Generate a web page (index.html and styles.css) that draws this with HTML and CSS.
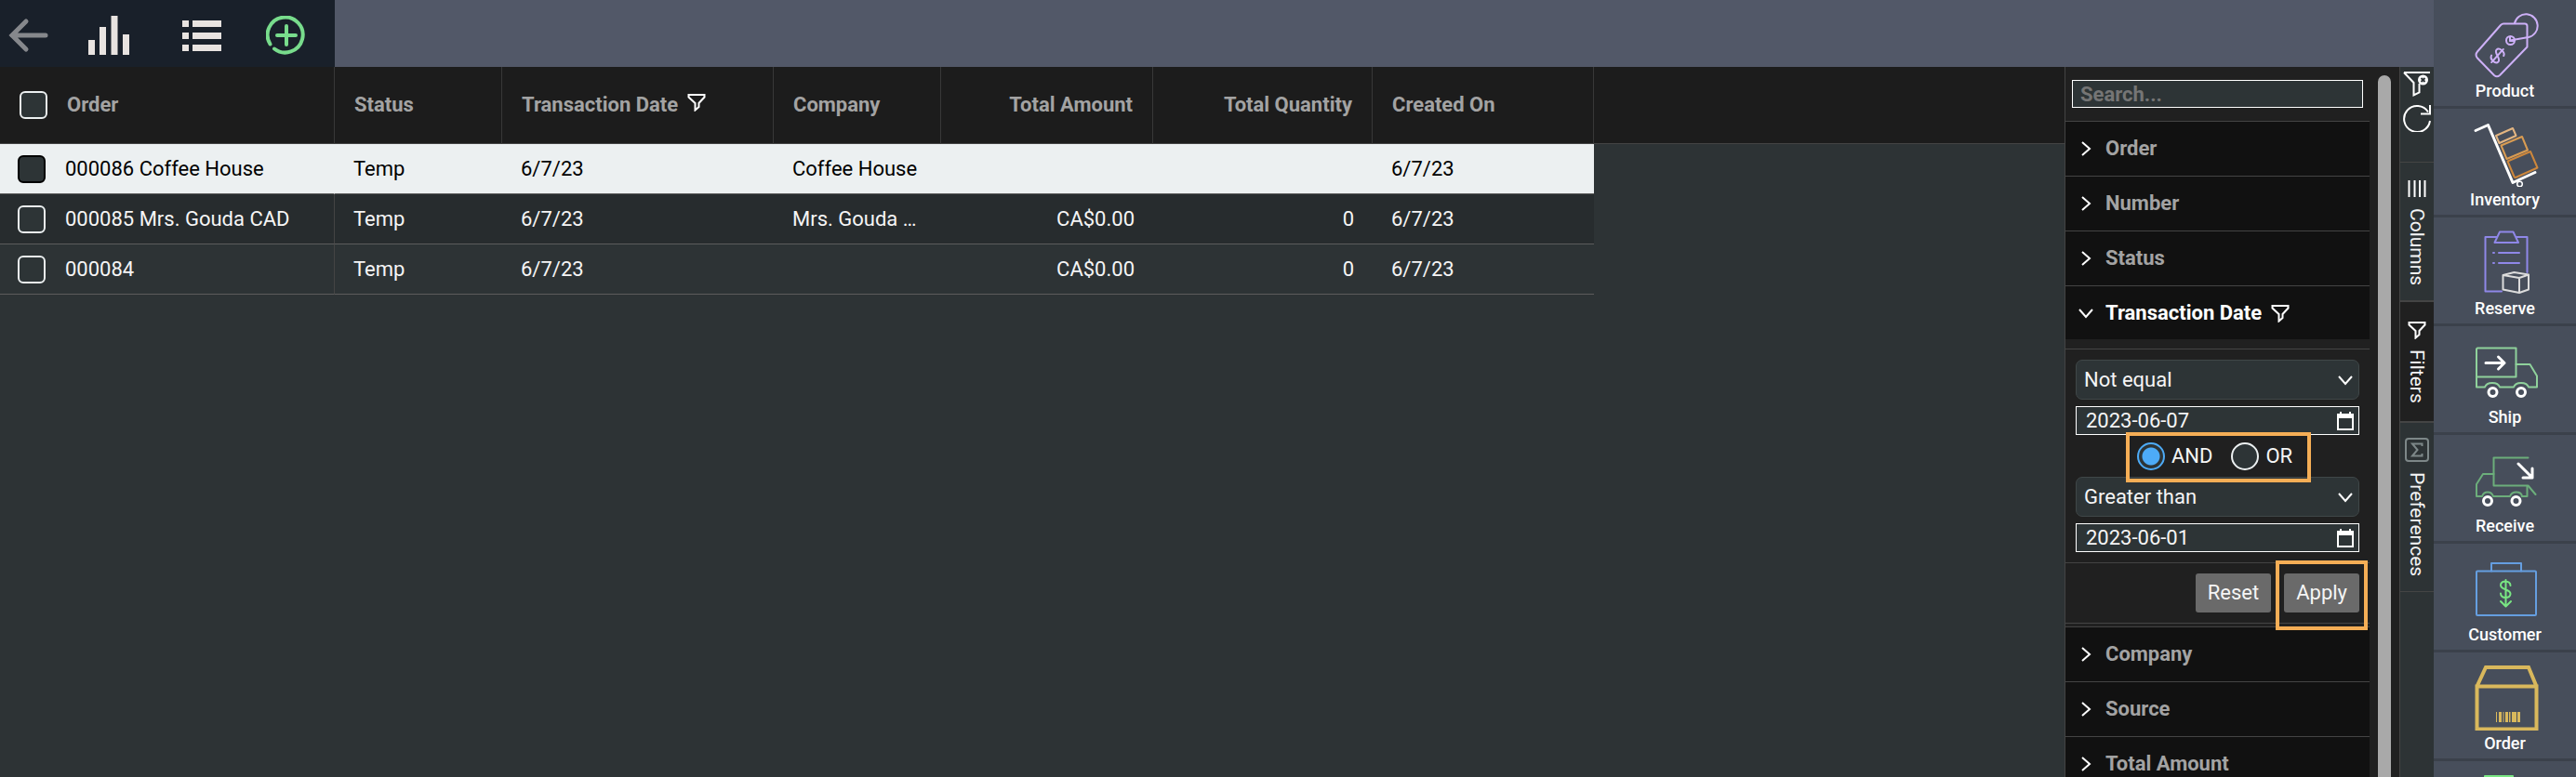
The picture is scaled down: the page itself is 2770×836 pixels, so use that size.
FILE: index.html
```html
<!DOCTYPE html>
<html lang="en">
<head>
    <meta charset="UTF-8">
    <meta name="viewport" content="width=device-width, initial-scale=1.0">
    <title>Orders</title>
    <link rel="stylesheet" href="styles.css">
</head>
<body>
    <!-- shared icons -->
    <svg class="sprite" aria-hidden="true">
        <symbol id="i-filter" viewBox="0 0 20 20"><path d="M1.500 2h17v2.500l-6 6.500v4l-4 3.500V11L1.500 4.500z"/></symbol>
        <symbol id="i-right" viewBox="0 0 16 16"><path d="M4 1l8 7-8 7"/></symbol>
        <symbol id="i-down" viewBox="0 0 16 16"><path d="M1 4l7 8 7-8"/></symbol>
        <symbol id="i-calendar" viewBox="0 0 20 20"><path d="M2 3h16v16H2z"/><path class="solid" d="M1 2h3V0h2v2h8V0h2v2h3v5H1z"/></symbol>
    </svg>

    <div class="main">
        <header class="topbar">
            <div class="toolbar">
                <button type="button" aria-label="Back">
                    <svg class="icon-back" viewBox="0 0 42 42"><path d="M39 21H3M18 6L3 21l15 15"/></svg>
                </button>
                <button type="button" aria-label="Charts">
                    <svg class="icon-light" viewBox="0 0 44 42"><path d="M0 26h7v16H0zM12 12h7v30h-7zM24.500 0h7v42h-7zM37 20h7v22h-7z"/></svg>
                </button>
                <button type="button" aria-label="List">
                    <svg class="icon-light" viewBox="0 0 44 42"><path d="M1 5h7v7H1zM12 5h31v7H12zM1 18h7v7H1zM12 18h31v7H12zM1 31h7v7H1zM12 31h31v7H12z"/></svg>
                </button>
                <button type="button" aria-label="Add">
                    <svg class="icon-add" viewBox="0 0 42 42"><path d="M8 35.500A19 19 0 1 0 3.500 30.500M21 11v20M11 21h20"/></svg>
                </button>
            </div>
        </header>

        <div class="workspace">
            <div class="grid">
                <table>
                    <colgroup>
                        <col class="col-order"><col class="col-status"><col class="col-date"><col class="col-company">
                        <col class="col-amount"><col class="col-quantity"><col class="col-created"><col>
                    </colgroup>
                    <thead>
                        <tr>
                            <th><label class="check"><input type="checkbox">Order</label></th>
                            <th>Status</th>
                            <th>Transaction Date <svg class="icon-filter"><use href="#i-filter"/></svg></th>
                            <th>Company</th>
                            <th class="num">Total Amount</th>
                            <th class="num">Total Quantity</th>
                            <th>Created On</th>
                            <td></td>
                        </tr>
                    </thead>
                    <tbody>
                        <tr class="selected">
                            <td><label class="check"><input type="checkbox">000086 Coffee House</label></td>
                            <td>Temp</td><td>6/7/23</td><td>Coffee House</td>
                            <td class="num"></td><td class="num"></td><td>6/7/23</td>
                        </tr>
                        <tr class="odd">
                            <td><label class="check"><input type="checkbox">000085 Mrs. Gouda CAD</label></td>
                            <td>Temp</td><td>6/7/23</td><td>Mrs. Gouda …</td>
                            <td class="num">CA$0.00</td><td class="num">0</td><td>6/7/23</td>
                        </tr>
                        <tr>
                            <td><label class="check"><input type="checkbox">000084</label></td>
                            <td>Temp</td><td>6/7/23</td><td></td>
                            <td class="num">CA$0.00</td><td class="num">0</td><td>6/7/23</td>
                        </tr>
                    </tbody>
                </table>
            </div>

            <aside class="panel">
                <div class="panel-body">
                    <div class="search">
                        <input type="text" placeholder="Search..." aria-label="Search">
                    </div>
                    <button type="button" class="group"><svg><use href="#i-right"/></svg>Order</button>
                    <button type="button" class="group"><svg><use href="#i-right"/></svg>Number</button>
                    <button type="button" class="group"><svg><use href="#i-right"/></svg>Status</button>
                    <button type="button" class="group open"><svg><use href="#i-down"/></svg>Transaction Date <svg class="icon-filter"><use href="#i-filter"/></svg></button>
                    <form class="filter">
                        <div class="fields">
                            <div class="field">
                                <select aria-label="First condition"><option>Not equal</option></select>
                                <svg class="icon-down"><use href="#i-down"/></svg>
                            </div>
                            <div class="field">
                                <input type="text" class="date" value="2023-06-07" aria-label="First date">
                                <svg class="icon-calendar"><use href="#i-calendar"/></svg>
                            </div>
                            <div class="operator">
                                <label><input type="radio" name="operator" checked>AND</label>
                                <label><input type="radio" name="operator">OR</label>
                            </div>
                            <div class="field">
                                <select aria-label="Second condition"><option>Greater than</option></select>
                                <svg class="icon-down"><use href="#i-down"/></svg>
                            </div>
                            <div class="field">
                                <input type="text" class="date" value="2023-06-01" aria-label="Second date">
                                <svg class="icon-calendar"><use href="#i-calendar"/></svg>
                            </div>
                        </div>
                        <div class="actions">
                            <button type="button">Reset</button>
                            <span class="apply"><button type="button">Apply</button></span>
                        </div>
                    </form>
                    <button type="button" class="group"><svg><use href="#i-right"/></svg>Company</button>
                    <button type="button" class="group"><svg><use href="#i-right"/></svg>Source</button>
                    <button type="button" class="group"><svg><use href="#i-right"/></svg>Total Amount</button>
                </div>
                <div class="scrollbar"></div>
            </aside>

            <div class="rail">
                <div class="rail-tools">
                    <button type="button" aria-label="Clear filters">
                        <svg viewBox="0 0 30 30"><path d="M1 2h28M1 2l10.500 11v13.500l6-3V14"/><circle class="solid" cx="21.500" cy="10" r="5.500"/><path class="cross" d="M19.500 8l4 4M23.500 8l-4 4"/></svg>
                    </button>
                    <button type="button" aria-label="Refresh">
                        <svg viewBox="0 0 30 30"><path d="M29 18A14 14 0 1 1 27 8.500M29 1v9.500H19"/></svg>
                    </button>
                </div>
                <button type="button" class="tab tab-columns">
                    <svg viewBox="0 0 20 20"><path d="M1.500 1v18M7.500 1v18M13 1v18M18.500 1v18"/></svg>Columns
                </button>
                <button type="button" class="tab tab-filters">
                    <svg><use href="#i-filter"/></svg>Filters
                </button>
                <button type="button" class="tab tab-preferences">
                    <svg viewBox="0 0 26 26"><rect x="1" y="1" width="24" height="24" rx="3"/><path d="M18.500 9V6.500H8l5.500 6.500L8 19.500h10.500V17"/></svg>Preferences
                </button>
            </div>
        </div>
    </div>

    <nav class="modules">
        <a href="#product">
            <svg viewBox="0 0 72 72" class="c-product">
                <path d="M34 13.500h23q2.500 0 2.500 2.500v22.500L30 69q-3 2.500-6 0L6 50.500q-3-3.500 0-7L31 15q1.500-1.500 3-1.500z"/>
                <path d="M46 13A12.500 12.500 0 1 1 61 28L41 31.500"/>
                <circle cx="41.500" cy="31.500" r="4.500"/><path d="M41 28v4h4"/>
                <g transform="rotate(42 27.500 48)"><path d="M32.500 43.500c-1-4-10-4-10 .5 0 4.500 10 3.500 10 8 0 4.500-9 4.500-10 0M27.500 38.500v19"/></g>
            </svg>
            Product
        </a>
        <a href="#inventory">
            <svg viewBox="0 0 72 72">
                <path class="c-white" d="M4 11.500L17.500 5.500 44 67.500l24-11"/><circle class="c-white thin" cx="51.500" cy="69" r="2.800"/>
                <path class="c-box1" d="M26 17l18-8 3.500 8-18 8z"/>
                <path class="c-box2" d="M31.500 27.500L54 18l6 14.500-22.500 9.500z"/>
                <path class="c-box3" d="M38.500 44.500L63 34l7.500 17.500L47 62q-1 0-1.500-1z"/>
            </svg>
            Inventory
        </a>
        <a href="#reserve">
            <svg viewBox="0 0 72 72" class="c-reserve">
                <path d="M27 9H14.500v58.500H32M47 9h12.500v38M30 3.500h14.500L50 15H24.500z"/>
                <path d="M29 26h22M29 37h22M23 26h1M23 37h1"/>
                <path class="c-cube" d="M33.500 50l12-3L61 49.500v16L51 69l-17.500-3.500zM33.500 50L51 53l10-3.500M51 53v16"/>
            </svg>
            Reserve
        </a>
        <a href="#ship">
            <svg viewBox="0 0 72 72" class="c-ship">
                <path d="M6 11.500h41.500v31H5V12.500z"/>
                <path d="M5 42.500v11h9c2-6 14-6 16 0h15c2-6 14-6 16 0h9v-12l-7.500-12.500h-15"/>
                <circle class="c-white" cx="22.500" cy="59" r="4.500"/><circle class="c-white" cx="53" cy="59" r="4.500"/>
                <path class="c-white" d="M15 27.500h20M28.500 21l6.500 6.500-6.500 6.500"/>
            </svg>
            Ship
        </a>
        <a href="#receive">
            <svg viewBox="0 0 72 72" class="c-receive">
                <path d="M60.500 12.500h-37v30h37L68.500 52"/>
                <path d="M23.500 30H12L5 41v13h6c2-6 10-6 12 0h18c2-6 12-6 13 0h5.500V43"/>
                <circle class="c-white" cx="17" cy="59" r="4.500"/><circle class="c-white" cx="47.500" cy="59" r="4.500"/>
                <path class="c-white" d="M50 19l15 15M65 24v10H55"/>
            </svg>
            Receive
        </a>
        <a href="#customer">
            <svg viewBox="0 0 72 72" class="c-customer">
                <rect x="5" y="17.500" width="64" height="47.500" rx="1"/><path d="M21 17.500V9h32v8.500"/>
                <path class="c-money" d="M41.500 33c0-6-10.500-6-10.500-.5s10.500 4 10.500 9.500-10.500 5.500-10.500-.5M36.500 27v28M31 50l5.500 5.500L42 50"/>
            </svg>
            Customer
        </a>
        <a href="#order">
            <svg viewBox="0 0 72 72" class="c-order">
                <path d="M5.500 24.500v46h64v-46zM5.500 24.500L15 4h46l8.500 20.500"/>
                <path class="bars" d="M26 52h1v11h-1zM29 52h3v11h-3zM33.500 52h1v11h-1zM36 52h3v11h-3zM40 52h1.500v11H40zM43 52h5v11h-5zM49 52h3v11h-3z"/>
            </svg>
            Order
        </a>
        <a href="#more" aria-label="More">
            <svg viewBox="0 0 72 72"><path class="c-money" d="M14 4h30v40H14z"/></svg>
        </a>
    </nav>
</body>
</html>
```
FILE: styles.css
```css
* {
    box-sizing: border-box;
    margin: 0;
    padding: 0;
}

body {
    display: flex;
    height: 100vh;
    overflow: hidden;
    background-color: #2d3335;
    color: #f5f5f5;
    font-family: Roboto, sans-serif;
    font-size: 22px;
    line-height: 26px;
}

button,
input,
select {
    font: inherit;
    color: inherit;
    background: none;
    border: none;
    border-radius: 0;
    outline: none;
}

button {
    cursor: pointer;
}

svg {
    fill: none;
    stroke: #fff;
    stroke-width: 2;
    flex: none;
}

.solid {
    fill: #fff;
    stroke: none;
}

.sprite {
    display: none;
}

.main {
    flex: 1;
    min-width: 0;
    display: flex;
    flex-direction: column;
}

/* top bar */
.topbar {
    height: 72px;
    flex: none;
    display: flex;
    background-color: #525868;
}

.toolbar {
    width: 360px;
    display: grid;
    grid-template-columns: 62px 110px 90px 92px;
    background-color: #19202a;
}

.toolbar button {
    display: flex;
    align-items: center;
    justify-content: center;
    padding-top: 4px;
}

.toolbar svg {
    width: 44px;
    height: 42px;
}

.toolbar .icon-back {
    stroke: #86888c;
    stroke-width: 5;
    stroke-linecap: round;
}

.toolbar .icon-light {
    fill: #e8e3e0;
    stroke: none;
}

.toolbar .icon-add {
    stroke: #78dc8c;
    stroke-width: 4;
    stroke-linecap: round;
}

.workspace {
    flex: 1;
    min-height: 0;
    display: flex;
}

/* grid */
.grid {
    flex: 1;
    min-width: 0;
}

table {
    width: 100%;
    table-layout: fixed;
    border-collapse: separate;
    border-spacing: 0;
}

.col-order { width: 360px; }
.col-status { width: 180px; }
.col-date { width: 292px; }
.col-company { width: 180px; }
.col-amount { width: 228px; }
.col-quantity { width: 236px; }
.col-created { width: 238px; }

th,
td {
    padding: 0 20px;
    text-align: left;
    white-space: nowrap;
    overflow: hidden;
    text-overflow: ellipsis;
}

thead th,
thead td {
    height: 83px;
    padding: 0 21px;
    background-color: #1c1c1c;
    border-bottom: 1px solid #444;
    color: #a3a3a3;
    font-weight: 700;
}

thead th {
    border-right: 1px solid #383838;
}

tbody td {
    height: 54px;
    border-bottom: 1px solid #5c5c5c;
}

tbody td:first-child {
    padding-left: 19px;
    border-right: 1px solid #444;
}

.odd td {
    background-color: #272c2e;
}

.selected td {
    background-color: #ecf0f1;
    color: #000;
}

.selected td:first-child {
    border-right-color: #ecf0f1;
}

.num {
    text-align: right;
}

.check {
    display: flex;
    align-items: center;
    gap: 21px;
}

.check input {
    appearance: none;
    width: 30px;
    height: 30px;
    flex: none;
    border: 2px solid #ecf0f1;
    border-radius: 6px;
    background-color: #2d3436;
}

.selected .check input {
    border-color: #000;
}

.icon-filter {
    width: 20px;
    height: 20px;
    margin-left: 4px;
}

/* filter panel */
.panel {
    width: 360px;
    flex: none;
    display: flex;
    border-left: 1px solid #444;
    background-color: #202020;
}

.panel-body {
    width: 327px;
    overflow: hidden;
}

.search {
    height: 58px;
    padding: 14px 7px;
}

.search input {
    display: block;
    width: 100%;
    height: 30px;
    padding: 0 8px;
    border: 1px solid #fff;
    background-color: #2d3436;
}

.search input::placeholder {
    color: #757575;
    font-weight: 700;
}

.group {
    display: flex;
    align-items: center;
    width: 100%;
    height: 59px;
    padding: 0 14px;
    border-top: 1px solid #444;
    background-color: #111;
    color: #a3a3a3;
    font-weight: 700;
}

.group svg:first-child {
    width: 16px;
    height: 16px;
    margin-right: 13px;
}

.group .icon-filter {
    margin-left: 10px;
}

.group.open {
    height: 58px;
    color: #fff;
}

.filter {
    margin: 10px 0 3px;
    border-top: 1px solid #444;
    border-bottom: 1px solid #444;
}

.fields {
    display: grid;
    gap: 7px;
    padding: 11px;
}

.field {
    display: grid;
    align-items: center;
}

.field > * {
    grid-area: 1 / 1;
}

.field svg {
    justify-self: end;
    pointer-events: none;
}

.field select {
    appearance: none;
    width: 100%;
    height: 43px;
    padding: 0 8px;
    border: 1px solid #404748;
    border-radius: 7px;
    background-color: #2d3436;
}

.field .date {
    width: 100%;
    height: 31px;
    padding: 0 10px;
    border: 1px solid #fff;
    background-color: #2d3436;
}

.icon-down {
    width: 16px;
    height: 16px;
    margin-right: 7px;
}

.icon-calendar {
    width: 20px;
    height: 20px;
    margin-right: 5px;
}

.operator {
    position: relative;
    display: flex;
    justify-content: center;
    gap: 20px;
    height: 31px;
    padding-right: 6px;
}

.operator label {
    display: flex;
    align-items: center;
    gap: 7px;
}

.operator input {
    appearance: none;
    width: 30px;
    height: 30px;
    border: 2px solid #ecf0f1;
    border-radius: 50%;
    background-color: #2d3436;
}

.operator input:checked {
    border-color: #4dabf7;
    background: #2d3436 radial-gradient(circle, #4dabf7 9px, transparent 10px);
}

/* highlight frames */
.operator::after,
.apply::after {
    content: '';
    position: absolute;
    border: 4px solid #f5ae56;
    pointer-events: none;
}

.operator::after {
    inset: -10px 52px -13px 54px;
}

.apply {
    position: relative;
}

.apply::after {
    inset: -14px -9px -19px;
}

.actions {
    display: flex;
    justify-content: flex-end;
    gap: 14px;
    padding: 11px;
    border-top: 1px solid #444;
}

.actions button {
    display: block;
    height: 42px;
    padding: 0 13px;
    border-radius: 3px;
    background-color: #6a6a6a;
}

.scrollbar {
    width: 14px;
    margin: 9px 0 0 9px;
    border-radius: 7px 7px 0 0;
    background-color: #a9a9a9;
}

/* side rail */
.rail {
    width: 37px;
    flex: none;
    border-left: 1px solid #444;
}

.rail-tools {
    display: flex;
    flex-direction: column;
    align-items: center;
    gap: 6px;
    height: 102px;
    padding-top: 4px;
}

.rail-tools svg {
    display: block;
    width: 30px;
    height: 30px;
}

.rail-tools .cross {
    stroke: #2d3436;
}

.tab {
    display: flex;
    align-items: center;
    gap: 11px;
    width: 36px;
    padding: 18px 0 16px;
    border-top: 1px solid #444;
    font-size: 21px;
    writing-mode: vertical-rl;
}

.tab svg {
    width: 20px;
    height: 20px;
}

.tab-filters {
    padding: 20px 0 19px;
    border-top: 2px solid #444;
    border-bottom: 1px solid #444;
    background-color: #202020;
}

.tab-preferences {
    padding: 16px 0;
    border-bottom: 1px solid #444;
}

.tab-preferences svg {
    width: 26px;
    height: 26px;
    stroke: #7d8788;
}

/* module menu */
.modules {
    width: 153px;
    flex: none;
}

.modules a {
    display: flex;
    flex-direction: column;
    align-items: center;
    gap: 2px;
    height: 117px;
    padding-top: 12px;
    border-bottom: 3px solid #3b414b;
    background-color: #474e5b;
    color: #fff;
    font-size: 18px;
    font-weight: 500;
    line-height: 24px;
    text-decoration: none;
}

.modules svg {
    width: 72px;
    height: 72px;
    stroke-width: 2;
    stroke-linejoin: round;
    stroke-linecap: round;
}

.modules .c-product { stroke: #cdb0f7; }
.modules .c-reserve { stroke: #8f87e8; }
.modules .c-ship { stroke: #8fd19b; }
.modules .c-receive { stroke: #6cae7b; }
.modules .c-customer { stroke: #659ee0; }
.modules .c-order { stroke: #d9b85c; }

.modules .c-order {
    stroke-width: 4;
    stroke-linejoin: miter;
}

.modules .bars {
    fill: #d9b85c;
    stroke: none;
}

.c-white { stroke: #fff; stroke-width: 3; }
.c-white.thin { stroke-width: 1.5; }
.c-cube { stroke: #dcdcdc; }
.c-box1 { stroke: #e3b581; }
.c-box2 { stroke: #d99c52; }
.c-box3 { stroke: #cd873c; }
.c-money { stroke: #79e683; }
```
